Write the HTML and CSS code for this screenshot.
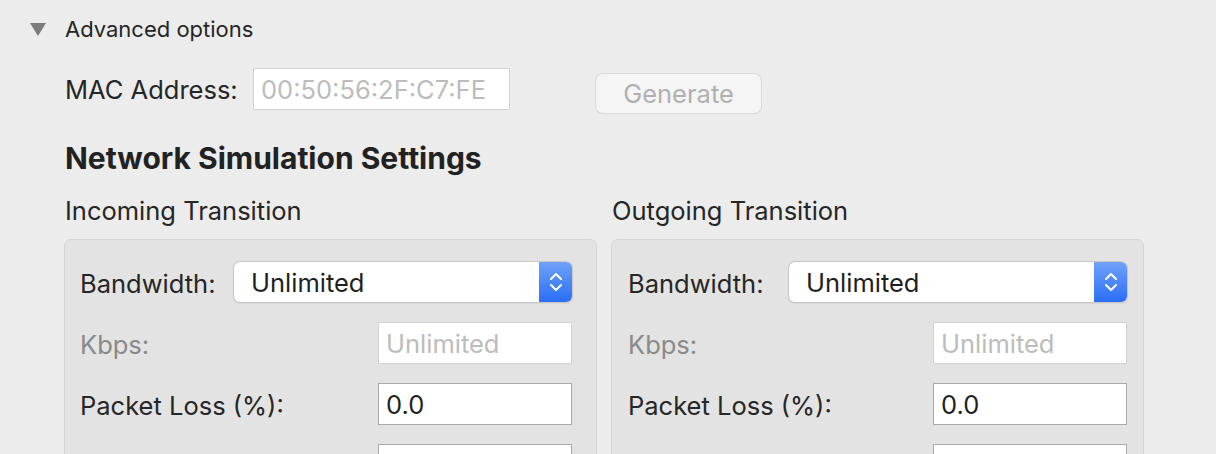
FILE: index.html
```html
<!DOCTYPE html>
<html lang="en">
<head>
<meta charset="utf-8">
<title>Advanced options</title>
<link rel="stylesheet" href="styles.css">
</head>
<body>
<div class="page">
  <div class="disclosure">
    <svg class="tri" width="16" height="13" viewBox="0 0 16 13"><path d="M0 0 H16 L8 13 Z" fill="#7b7b7b"/></svg>
    <span class="disclosure-label">Advanced options</span>
  </div>

  <div class="content">
    <div class="mac-row">
      <span class="label">MAC Address:</span>
      <div class="field field-mac disabled">00:50:56:2F:C7:FE</div>
      <button class="btn-generate" disabled>Generate</button>
    </div>

    <h2 class="heading">Network Simulation Settings</h2>

    <div class="columns">
      <section class="col">
        <h3 class="subheading">Incoming Transition</h3>
        <div class="panel panel-in">
          <div class="row">
            <span class="label">Bandwidth:</span>
            <div class="select">
              <span class="select-value">Unlimited</span>
              <span class="stepper">
                <svg width="16" height="24" viewBox="0 0 16 24"><path d="M3 9 L8 4 L13 9 M3 15 L8 20 L13 15" fill="none" stroke="#fff" stroke-width="2" stroke-linecap="round" stroke-linejoin="round"/></svg>
              </span>
            </div>
          </div>
          <div class="row">
            <span class="label muted">Kbps:</span>
            <div class="field field-num disabled">Unlimited</div>
          </div>
          <div class="row">
            <span class="label">Packet Loss (%):</span>
            <div class="field field-num">0.0</div>
          </div>
          <div class="row">
            <span class="label"></span>
            <div class="field field-num"></div>
          </div>
        </div>
      </section>

      <section class="col">
        <h3 class="subheading">Outgoing Transition</h3>
        <div class="panel panel-out">
          <div class="row">
            <span class="label">Bandwidth:</span>
            <div class="select">
              <span class="select-value">Unlimited</span>
              <span class="stepper">
                <svg width="16" height="24" viewBox="0 0 16 24"><path d="M3 9 L8 4 L13 9 M3 15 L8 20 L13 15" fill="none" stroke="#fff" stroke-width="2" stroke-linecap="round" stroke-linejoin="round"/></svg>
              </span>
            </div>
          </div>
          <div class="row">
            <span class="label muted">Kbps:</span>
            <div class="field field-num disabled">Unlimited</div>
          </div>
          <div class="row">
            <span class="label">Packet Loss (%):</span>
            <div class="field field-num">0.0</div>
          </div>
          <div class="row">
            <span class="label"></span>
            <div class="field field-num"></div>
          </div>
        </div>
      </section>
    </div>
  </div>
</div>
</body>
</html>
```

FILE: styles.css
```css
html, body {
  margin: 0;
  padding: 0;
  height: 454px;
  overflow: hidden;
}
body {
  background: #ececec;
  font-family: Inter, "Noto Sans", sans-serif;
  font-size: 25.5px;
  color: #262626;
}
.page {
  padding-top: 16px;
}
.disclosure {
  display: flex;
  align-items: center;
  padding-left: 30px;
  height: 26px;
}
.tri {
  display: block;
  margin-right: 19px;
}
.disclosure-label {
  font-size: 22px;
  line-height: 26px;
}
.content {
  padding-left: 64px;
}
.mac-row {
  display: flex;
  align-items: center;
  margin-top: 26px;
  height: 42px;
}
.label {
  white-space: nowrap;
}
.mac-row .label {
  padding-left: 1px;
  width: 188px;
}
.field {
  box-sizing: border-box;
  height: 42px;
  background: #fff;
  border: 1px solid #a9a9a9;
  padding: 0 7px;
  display: flex;
  align-items: center;
  color: #1f1f1f;
}
.field.disabled {
  border-color: #d2d2d2;
  color: #bcbcbc;
}
.field-mac {
  width: 257px;
}
.btn-generate {
  box-sizing: border-box;
  margin-left: 86px;
  margin-top: 8px;
  width: 165px;
  height: 39px;
  border: none;
  border-radius: 7px;
  background: #f5f5f5;
  box-shadow: 0 0 0 1px #dadada, 0 1px 1px rgba(0,0,0,0.12);
  font: inherit;
  color: #b0b0b0;
  padding: 0;
}
.heading {
  margin: 32px 0 0 1px;
  font-size: 30px;
  font-weight: 700;
  line-height: 32px;
  color: #222;
}
.columns {
  display: grid;
  grid-template-columns: 533px 533px;
  column-gap: 14px;
  margin-top: 22px;
}
.subheading {
  margin: 0 0 0 1px;
  font-weight: 400;
  font-size: 25.5px;
  line-height: 30px;
  color: #262626;
}
.panel {
  box-sizing: border-box;
  margin-top: 13px;
  background: #e3e3e3;
  border: 1px solid #d5d5d5;
  border-radius: 7px;
  padding: 21px 24px 20px 15px;
  display: flex;
  flex-direction: column;
  gap: 19px;
}
.panel-out {
  padding-left: 16px;
  padding-right: 16px;
}
.row {
  display: flex;
  align-items: center;
  justify-content: space-between;
  min-height: 42px;
}
.row .label {
  padding-top: 3px;
}
.label.muted {
  color: #8a8a8a;
}
.select {
  box-sizing: border-box;
  width: 338px;
  height: 40px;
  background: #fff;
  border-radius: 6px;
  box-shadow: 0 0 0 1px #c8c8c8, 0 1px 2px rgba(0,0,0,0.18);
  display: flex;
  align-items: stretch;
  overflow: hidden;
}
.select-value {
  flex: 1;
  padding-left: 17px;
  display: flex;
  align-items: center;
  color: #1f1f1f;
}
.stepper {
  width: 33px;
  background: linear-gradient(#6fa1f8, #2b6ff6);
  display: flex;
  align-items: center;
  justify-content: center;
}
.stepper svg {
  display: block;
}
.field-num {
  width: 194px;
}
```
